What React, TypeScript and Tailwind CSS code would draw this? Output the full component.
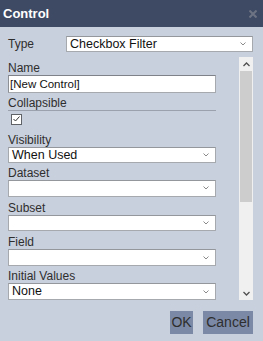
import React from "react";

function Chevron() {
  return (
    <svg width="6" height="4" viewBox="0 0 6 4" className="shrink-0">
      <path d="M0.5 0.5 L3 3 L5.5 0.5" fill="none" stroke="#8a8a8a" strokeWidth="1" />
    </svg>
  );
}

function Select({ value, className = "" }: { value?: string; className?: string }) {
  return (
    <div
      className={`flex items-center justify-between bg-white border border-[#a6a9ae] border-t-[#94979c] pl-[3px] pr-[6px] text-[12.5px] text-[#111] font-['Liberation_Sans_Narrow','Liberation_Sans',sans-serif] ${className}`}
    >
      <span className="leading-none">{value}</span>
      <Chevron />
    </div>
  );
}

function Label({ children, className = "" }: { children: React.ReactNode; className?: string }) {
  return <div className={`text-[12px] leading-[14px] text-[#2e2e2e] ${className}`}>{children}</div>;
}

export default function App() {
  return (
    <div className="w-[263px] h-[341px] bg-[#c9d0dd] flex flex-col font-['Liberation_Sans',Arial,sans-serif] overflow-hidden">
      {/* Title bar */}
      <div className="h-[27px] bg-[#3e4a64] flex items-center justify-between pl-[3px] pr-[6px] shrink-0">
        <span className="text-white font-bold text-[13px] leading-none">Control</span>
        <svg width="8" height="8" viewBox="0 0 8 8">
          <path d="M0.5 0.5 L7.5 7.5 M7.5 0.5 L0.5 7.5" stroke="#6d7382" strokeWidth="2" />
        </svg>
      </div>

      <div className="flex-1 flex flex-col pl-[8px] pr-[10px]">
        {/* Type row */}
        <div className="flex items-center mt-[8px]">
          <div className="w-[58px] text-[12px] text-[#2e2e2e]">Type</div>
          <Select value="Checkbox Filter" className="w-[187px] h-[16px]" />
        </div>

        {/* Scroll area */}
        <div className="flex mt-[4px] h-[243px]">
          <div className="w-[208px] flex flex-col pt-[4px]">
            <Label>Name</Label>
            <div className="h-[18px] bg-white border border-[#a6a9ae] border-t-[#7f8288] border-l-[#8d9095] pl-[1px] text-[11.5px] leading-[16px] text-[#111]">
              [New Control]
            </div>
            <Label className="mt-[3px]">Collapsible</Label>
            <div className="h-px bg-[#9ba2ae]" />
            <div className="mt-[3px] ml-[3px] w-[11px] h-[11px] bg-white border border-[#5f6368] flex items-center justify-center">
              <svg width="7" height="6" viewBox="0 0 7 6">
                <path d="M0.5 3 L2.5 5 L6.5 0.5" fill="none" stroke="#333" strokeWidth="1" />
              </svg>
            </div>

            <Label className="mt-[8px]">Visibility</Label>
            <Select value="When Used" className="h-[16px]" />
            <Label className="mt-[3px]">Dataset</Label>
            <Select className="h-[17px]" />
            <Label className="mt-[4px]">Subset</Label>
            <Select className="h-[17px]" />
            <Label className="mt-[4px]">Field</Label>
            <Select className="h-[17px]" />
            <Label className="mt-[3px]">Initial Values</Label>
            <Select value="None" className="h-[17px]" />
          </div>

          {/* Scrollbar */}
          <div className="ml-[23px] w-[14px] bg-[#f0f0f0] flex flex-col">
            <div className="h-[14px] flex items-center justify-center">
              <svg width="7" height="5" viewBox="0 0 7 5">
                <path d="M0.5 4 L3.5 1 L6.5 4" fill="none" stroke="#505050" strokeWidth="1.3" />
              </svg>
            </div>
            <div className="h-[131px] mx-[1px] bg-[#cdcdcd]" />
            <div className="flex-1" />
            <div className="h-[14px] flex items-center justify-center">
              <svg width="7" height="5" viewBox="0 0 7 5">
                <path d="M0.5 1 L3.5 4 L6.5 1" fill="none" stroke="#505050" strokeWidth="1.3" />
              </svg>
            </div>
          </div>
        </div>

        {/* Buttons */}
        <div className="flex justify-end gap-[10px] mt-[11px]">
          <div className="h-[23px] w-[23px] bg-[#7b89a6] text-[#2e2e2e] text-[14px] flex items-center justify-center">OK</div>
          <div className="h-[23px] w-[50px] bg-[#7b89a6] text-[#2e2e2e] text-[14px] flex items-center justify-center">Cancel</div>
        </div>
      </div>
    </div>
  );
}
